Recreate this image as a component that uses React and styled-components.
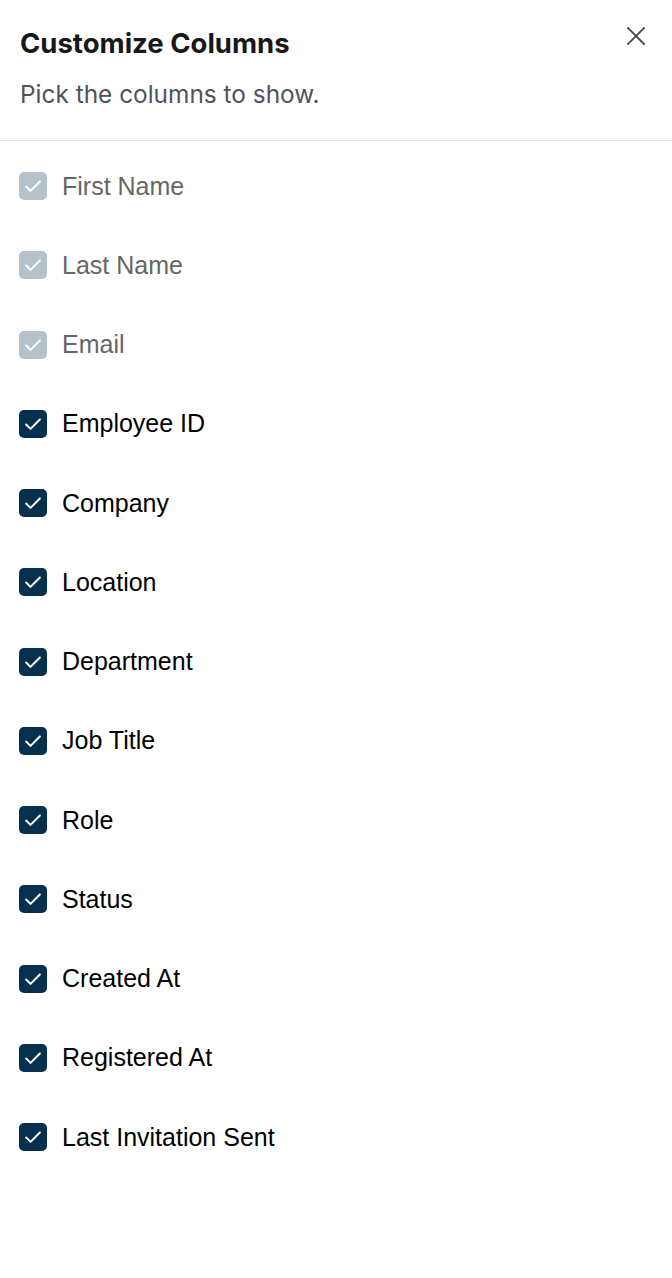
import React from "react";
import styled, { createGlobalStyle } from "styled-components";

const GlobalStyle = createGlobalStyle`
    body {
        margin: 0;
        background: #ffffff;
    }
`;

const Panel = styled.div`
    width: 672px;
    min-height: 1278px;
    background: #ffffff;
    font-family: Inter, "Noto Sans", sans-serif;
`;

const Header = styled.div`
    position: relative;
    padding: 26px 20px 30px;
    border-bottom: 1px solid #e4e4e7;
`;

const Title = styled.h2`
    margin: 0;
    font-size: 27.5px;
    line-height: 34px;
    font-weight: 700;
    color: #18181b;
`;

const Subtitle = styled.p`
    margin: 18px 0 0;
    font-size: 24.4px;
    line-height: 32px;
    color: #52525b;
`;

const CloseButton = styled.button`
    position: absolute;
    top: 24px;
    right: 24px;
    width: 24px;
    height: 24px;
    padding: 0;
    border: none;
    background: none;
    color: #4a4a4a;
    display: flex;
    align-items: center;
    justify-content: center;
`;

const List = styled.ul`
    list-style: none;
    margin: 0;
    padding: 31px 19px;
    display: flex;
    flex-direction: column;
    gap: 51.25px;
`;

const Row = styled.li`
    display: flex;
    align-items: center;
    gap: 15px;
    height: 28px;
`;

const Box = styled.span`
    width: 28px;
    height: 28px;
    border-radius: 5px;
    background: ${props => (props.locked ? "#b7c1cb" : "#06304e")};
    display: flex;
    align-items: center;
    justify-content: center;
    flex-shrink: 0;
`;

const Label = styled.span`
    font-family: "Liberation Sans", Arial, sans-serif;
    font-size: 25px;
    color: ${props => (props.locked ? "#666666" : "#000000")};
`;

const columns = [
    { name: "First Name", locked: true },
    { name: "Last Name", locked: true },
    { name: "Email", locked: true },
    { name: "Employee ID" },
    { name: "Company" },
    { name: "Location" },
    { name: "Department" },
    { name: "Job Title" },
    { name: "Role" },
    { name: "Status" },
    { name: "Created At" },
    { name: "Registered At" },
    { name: "Last Invitation Sent" }
];

const Check = () => (
    <svg width="22" height="22" viewBox="0 0 24 24" fill="none" stroke="#ffffff" strokeWidth="2.2" strokeLinecap="round" strokeLinejoin="round">
        <path d="M4.5 12.5l4.8 4.8L19.5 7" />
    </svg>
);

export default function App() {
    return (
        <Panel>
            <GlobalStyle />
            <Header>
                <Title>Customize Columns</Title>
                <Subtitle>Pick the columns to show.</Subtitle>
                <CloseButton aria-label="Close">
                    <svg width="20" height="20" viewBox="0 0 20 20" stroke="currentColor" strokeWidth="1.8" strokeLinecap="square">
                        <path d="M2 2l16 16M18 2L2 18" />
                    </svg>
                </CloseButton>
            </Header>
            <List>
                {columns.map(col => (
                    <Row key={col.name}>
                        <Box locked={col.locked}>
                            <Check />
                        </Box>
                        <Label locked={col.locked}>{col.name}</Label>
                    </Row>
                ))}
            </List>
        </Panel>
    );
}
